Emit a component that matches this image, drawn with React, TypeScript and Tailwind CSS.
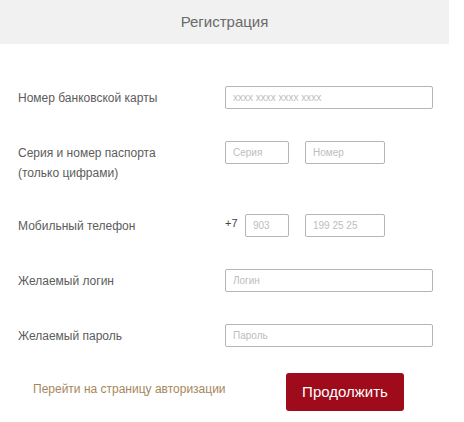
import React from 'react';

const font = { fontFamily: '"Liberation Sans", Arial, sans-serif' };

const Field: React.FC<{ placeholder: string; className: string }> = ({ placeholder, className }) => (
    <input
        type="text"
        placeholder={placeholder}
        className={`h-[23px] border border-[#b5b5b5] rounded-[2px] px-[7px] text-[10px] text-[#555] placeholder:text-[#bdbdbd] outline-none bg-white ${className}`}
    />
);

const App: React.FC = () => {
    return (
        <div className="w-[464px] h-[422px] bg-white text-[#5c5c5c]" style={font}>
            <div className="w-[449px] h-[44px] bg-[#f1f1f1] flex items-center justify-center text-[15px] text-[#6a6a6a]">
                Регистрация
            </div>

            <div className="pl-[18px]">
                <div className="mt-[42px] flex items-center">
                    <label className="w-[207px] text-[12px]">Номер банковской карты</label>
                    <Field placeholder="xxxx xxxx xxxx xxxx" className="w-[208px]" />
                </div>

                <div className="mt-[32px] flex items-start h-[42px]">
                    <label className="w-[207px] text-[12px] leading-[20px] mt-[2px]">
                        Серия и номер паспорта
                        <br />
                        (только цифрами)
                    </label>
                    <Field placeholder="Серия" className="w-[64px]" />
                    <Field placeholder="Номер" className="w-[80px] ml-[16px]" />
                </div>

                <div className="mt-[31px] flex items-center">
                    <label className="w-[207px] text-[12px]">Мобильный телефон</label>
                    <span className="w-[20px] text-[11px] text-[#444] -mt-[4px]">+7</span>
                    <Field placeholder="903" className="w-[44px]" />
                    <Field placeholder="199 25 25" className="w-[80px] ml-[16px]" />
                </div>

                <div className="mt-[32px] flex items-center">
                    <label className="w-[207px] text-[12px]">Желаемый логин</label>
                    <Field placeholder="Логин" className="w-[208px]" />
                </div>

                <div className="mt-[32px] flex items-center">
                    <label className="w-[207px] text-[12px]">Желаемый пароль</label>
                    <Field placeholder="Пароль" className="w-[208px]" />
                </div>

                <div className="mt-[26px] flex items-start">
                    <div className="w-[268px] pl-[15px] mt-[3px]">
                        <a href="#" className="text-[12px] leading-[20px] text-[#a6875c]">
                            Перейти на страницу авторизации
                        </a>
                    </div>
                    <button className="w-[118px] h-[38px] rounded-[3px] bg-[#9e0b1b] text-white text-[15px]">
                        Продолжить
                    </button>
                </div>
            </div>
        </div>
    );
};

export default App;
